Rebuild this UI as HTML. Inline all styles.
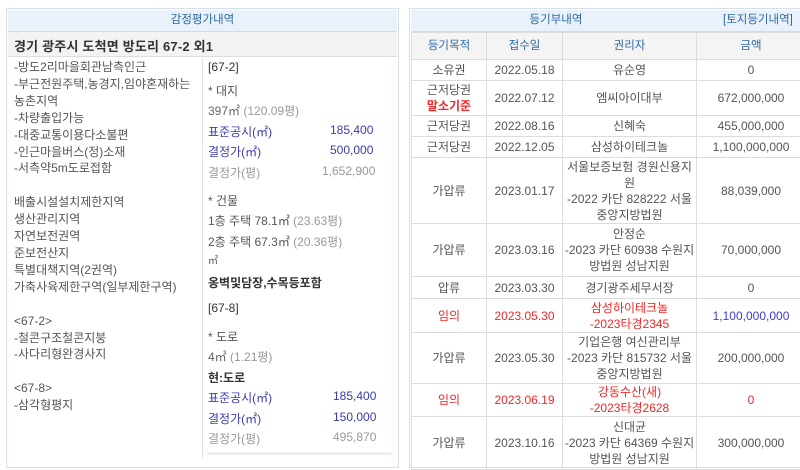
<!DOCTYPE html>
<html><head><meta charset="utf-8"><style>
*{margin:0;padding:0;box-sizing:border-box}
body{width:800px;height:456px;overflow:hidden;background:#fff;font-family:"Liberation Sans","Noto Sans CJK KR","NanumGothic",sans-serif;font-size:12px;color:#555;position:relative}
.a{position:absolute;white-space:nowrap}
.box{position:absolute;border:1px solid #d6dee8}
.hd{position:absolute;background:#e9f1fb;border-bottom:1px solid #d2dce8;color:#2d6aa6;text-align:center;line-height:21px;font-size:11.5px}
.blue{color:#3b3bb0}
.gray{color:#999}
.red{color:#f02828}
table{position:absolute;left:411px;top:32px;border-collapse:collapse;width:395px}
td,th{border:1px solid #dcdcdc;text-align:center;font-weight:normal;line-height:16px;color:#555;font-size:12px}
th{background:#f4f4f4;color:#2d6aa6;height:27px;font-size:11.5px}
td.r{color:#f02828}
</style></head><body>
<div class="box" style="left:6px;top:8px;width:393px;height:460px"></div>
<div class="hd" style="left:8px;top:10px;width:389px;height:22px">감정평가내역</div>
<div class="a" style="left:8px;top:32px;width:389px;height:25px;background:#f3f3f3;border-bottom:1px solid #ddd"></div>
<div class="a" style="left:14px;top:36px;font-size:13px;color:#333;font-weight:bold;letter-spacing:0.2px">경기 광주시 도척면 방도리 67-2 외1</div>
<div class="a" style="left:202px;top:58px;width:1px;height:400px;background:#e2e2e2"></div>
<div class="a" style="left:14px;top:59px;line-height:16.9px;white-space:pre">-방도2리마을회관남측인근
-부근전원주택,농경지,임야혼재하는
농촌지역
-차량출입가능
-대중교통이용다소불편
-인근마을버스(정)소재
-서측약5m도로접함

배출시설설치제한지역
생산관리지역
자연보전권역
준보전산지
특별대책지역(2권역)
가축사육제한구역(일부제한구역)

&lt;67-2&gt;
-철콘구조철콘지붕
-사다리형완경사지

&lt;67-8&gt;
-삼각형평지</div>
<div class="a" style="left:208px;top:60px;color:#333">[67-2]</div>
<div class="a" style="left:208px;top:82px">* 대지</div>
<div class="a gray" style="left:208px;top:102px"><span style="color:#666">397㎡</span> (120.09평)</div>
<div class="a blue" style="left:208px;top:123px">표준공시(㎡)</div><div class="a blue" style="left:330px;top:123px">185,400</div>
<div class="a blue" style="left:208px;top:143px">결정가(㎡)</div><div class="a blue" style="left:330px;top:143px">500,000</div>
<div class="a gray" style="left:208px;top:164px">결정가(평)</div><div class="a gray" style="left:322px;top:164px">1,652,900</div>
<div class="a" style="left:208px;top:192px">* 건물</div>
<div class="a" style="left:208px;top:212px">1층 주택 78.1㎡ <span class="gray">(23.63평)</span></div>
<div class="a" style="left:208px;top:233px">2층 주택 67.3㎡ <span class="gray">(20.36평)</span></div>
<div class="a" style="left:208px;top:252px;font-size:10px">㎡</div>
<div class="a" style="left:208px;top:274px;color:#333;font-weight:bold">옹벽및담장,수목등포함</div>
<div class="a" style="left:208px;top:301px;color:#333">[67-8]</div>
<div class="a" style="left:208px;top:328px">* 도로</div>
<div class="a gray" style="left:208px;top:348px"><span style="color:#666">4㎡</span> (1.21평)</div>
<div class="a" style="left:208px;top:369px;color:#333;font-weight:bold">현:도로</div>
<div class="a blue" style="left:208px;top:389px">표준공시(㎡)</div><div class="a blue" style="left:333px;top:389px">185,400</div>
<div class="a blue" style="left:208px;top:410px">결정가(㎡)</div><div class="a blue" style="left:333px;top:410px">150,000</div>
<div class="a gray" style="left:208px;top:430px">결정가(평)</div><div class="a gray" style="left:333px;top:430px">495,870</div>
<div class="a" style="left:207px;top:452px;width:185px;height:3px;background:#eee"></div>
<div class="box" style="left:409px;top:8px;width:400px;height:460px"></div>
<div class="hd" style="left:411px;top:10px;width:396px;height:22px"><span style="position:absolute;left:0;width:290px;text-align:center">등기부내역</span><span style="position:absolute;left:312px">[토지등기내역]</span></div>
<table>
<tr><th style="width:75px">등기목적</th><th style="width:76px">접수일</th><th style="width:134px">권리자</th><th>금액</th></tr>
<tr style="height:21px"><td>소유권</td><td>2022.05.18</td><td>유순영</td><td>0</td></tr>
<tr style="height:35px"><td>근저당권<br><b style="color:#f02828">말소기준</b></td><td>2022.07.12</td><td>엠씨아이대부</td><td>672,000,000</td></tr>
<tr style="height:21px"><td>근저당권</td><td>2022.08.16</td><td>신혜숙</td><td>455,000,000</td></tr>
<tr style="height:21px"><td>근저당권</td><td>2022.12.05</td><td>삼성하이테크놀</td><td>1,100,000,000</td></tr>
<tr style="height:66px"><td>가압류</td><td>2023.01.17</td><td>서울보증보험 경원신용지<br>원<br>-2022 카단 828222 서울<br>중앙지방법원</td><td>88,039,000</td></tr>
<tr style="height:53px"><td>가압류</td><td>2023.03.16</td><td>안정순<br>-2023 카단 60938 수원지<br>방법원 성남지원</td><td>70,000,000</td></tr>
<tr style="height:22px"><td>압류</td><td>2023.03.30</td><td>경기광주세무서장</td><td>0</td></tr>
<tr style="height:34px"><td class="r">임의</td><td class="r">2023.05.30</td><td class="r">삼성하이테크놀<br>-2023타경2345</td><td style="color:#3b3bdd">1,100,000,000</td></tr>
<tr style="height:51px"><td>가압류</td><td>2023.05.30</td><td>기업은행 여신관리부<br>-2023 카단 815732 서울<br>중앙지방법원</td><td>200,000,000</td></tr>
<tr style="height:33px"><td class="r">임의</td><td class="r">2023.06.19</td><td class="r">강동수산(새)<br>-2023타경2628</td><td class="r">0</td></tr>
<tr style="height:53px"><td>가압류</td><td>2023.10.16</td><td>신대균<br>-2023 카단 64369 수원지<br>방법원 성남지원</td><td>300,000,000</td></tr>
</table>
</body></html>
